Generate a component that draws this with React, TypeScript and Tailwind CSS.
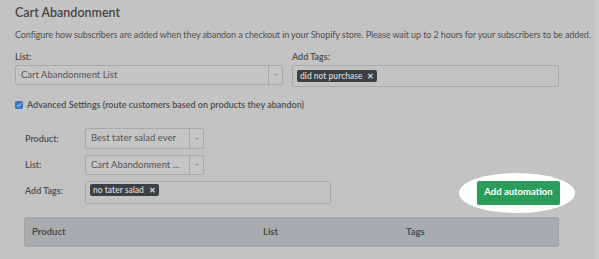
import React from 'react';

const Select: React.FC<{ value: string; className?: string }> = ({ value, className }) => (
  <div
    className={`flex items-stretch border border-[#a9a9a9] rounded-[2px] bg-[#c5c5c5] text-[#555] ${className ?? ''}`}
  >
    <div className="flex-1 flex items-center pl-[5px] text-[9.5px] truncate">{value}</div>
    <div className="w-[14px] border-l border-[#a9a9a9] flex items-center justify-center">
      <div className="w-0 h-0 border-l-[2px] border-r-[2px] border-t-[2px] border-l-transparent border-r-transparent border-t-[#999]" />
    </div>
  </div>
);

const Tag: React.FC<{ label: string }> = ({ label }) => (
  <span className="inline-flex items-center gap-[5px] h-[12px] px-[3px] rounded-[2px] bg-[#3b4045] text-[#d6d6d6] text-[8.5px] font-semibold leading-none">
    {label}
    <span className="text-[8px]">✕</span>
  </span>
);

export default function App() {
  return (
    <div className="flex w-[599px] h-[259px] bg-[#c3c3c3] overflow-hidden font-['Lato',sans-serif]">
      <div className="flex-1 min-w-0 pl-[15px] pt-[4px] pr-[34px]">
        <h2 className="text-[12.5px] font-semibold leading-[18px] text-[#454545]">Cart Abandonment</h2>
        <p className="mt-[7px] text-[9px] tracking-[-0.1px] leading-[12px] text-[#505050] whitespace-nowrap">
          Configure how subscribers are added when they abandon a checkout in your Shopify store. Please wait up to 2
          hours for your subscribers to be added.
        </p>

        <div className="grid grid-cols-[268px_267px] gap-x-[9px] mt-[10px]">
          <div>
            <div className="text-[9px] font-semibold leading-[12px] text-[#4d4d4d]">List:</div>
            <Select value="Cart Abandonment List" className="mt-[2px] h-[20px]" />
          </div>
          <div>
            <div className="text-[9px] font-semibold leading-[12px] text-[#4d4d4d]">Add Tags:</div>
            <div className="mt-[2px] h-[22px] border border-[#a9a9a9] rounded-[2px] flex items-center pl-[4px]">
              <Tag label="did not purchase" />
            </div>
          </div>
        </div>

        <div className="flex items-center gap-[4px] mt-[12px] h-[12px]">
          <div className="w-[8px] h-[8px] rounded-[1.5px] bg-[#3b78c4] flex items-center justify-center">
            <svg viewBox="0 0 8 8" className="w-[6px] h-[6px]">
              <path d="M1.3 4.2 L3.2 6 L6.8 1.8" stroke="#d8e4f2" strokeWidth="1.3" fill="none" />
            </svg>
          </div>
          <span className="text-[9px] font-semibold text-[#4d4d4d]">
            Advanced Settings (route customers based on products they abandon)
          </span>
        </div>

        <div className="pl-[10px] mt-[17px]">
          <div className="flex items-center">
            <span className="w-[60px] text-[9px] font-semibold text-[#4d4d4d]">Product:</span>
            <Select value="Best tater salad ever" className="w-[119px] h-[21px]" />
          </div>
          <div className="flex items-center mt-[6px]">
            <span className="w-[60px] text-[9px] font-semibold text-[#4d4d4d]">List:</span>
            <Select value="Cart Abandonment ..." className="w-[119px] h-[20px]" />
          </div>
          <div className="flex items-center mt-[6px] h-[23px]">
            <span className="w-[60px] self-start pt-[3px] text-[9px] font-semibold text-[#4d4d4d]">Add Tags:</span>
            <div className="w-[246px] h-[23px] border border-[#a9a9a9] rounded-[2px] flex items-start pt-[2px] pl-[4px]">
              <Tag label="no tater salad" />
            </div>
            <div className="ml-auto -mr-[16px] -my-[8px] w-[116px] h-[40px] rounded-[50%] bg-white flex items-center justify-center">
              <button className="ml-[3px] w-[83px] h-[24px] rounded-[2px] bg-[#2b9d5b] text-white text-[9.5px] font-bold">
                Add automation
              </button>
            </div>
          </div>

          <div className="-ml-[1px] mt-[13px] h-[30px] rounded-[3px] border border-[#9fa3a6] bg-[#a8acaf] flex items-center text-[9.5px] font-bold text-[#4a4d50]">
            <span className="w-[238px] pl-[7px]">Product</span>
            <span className="w-[143px]">List</span>
            <span>Tags</span>
          </div>
        </div>
      </div>
      <div className="w-[6px] border-l border-[#bdbdbd] bg-[#c9c9c9]" />
    </div>
  );
}
